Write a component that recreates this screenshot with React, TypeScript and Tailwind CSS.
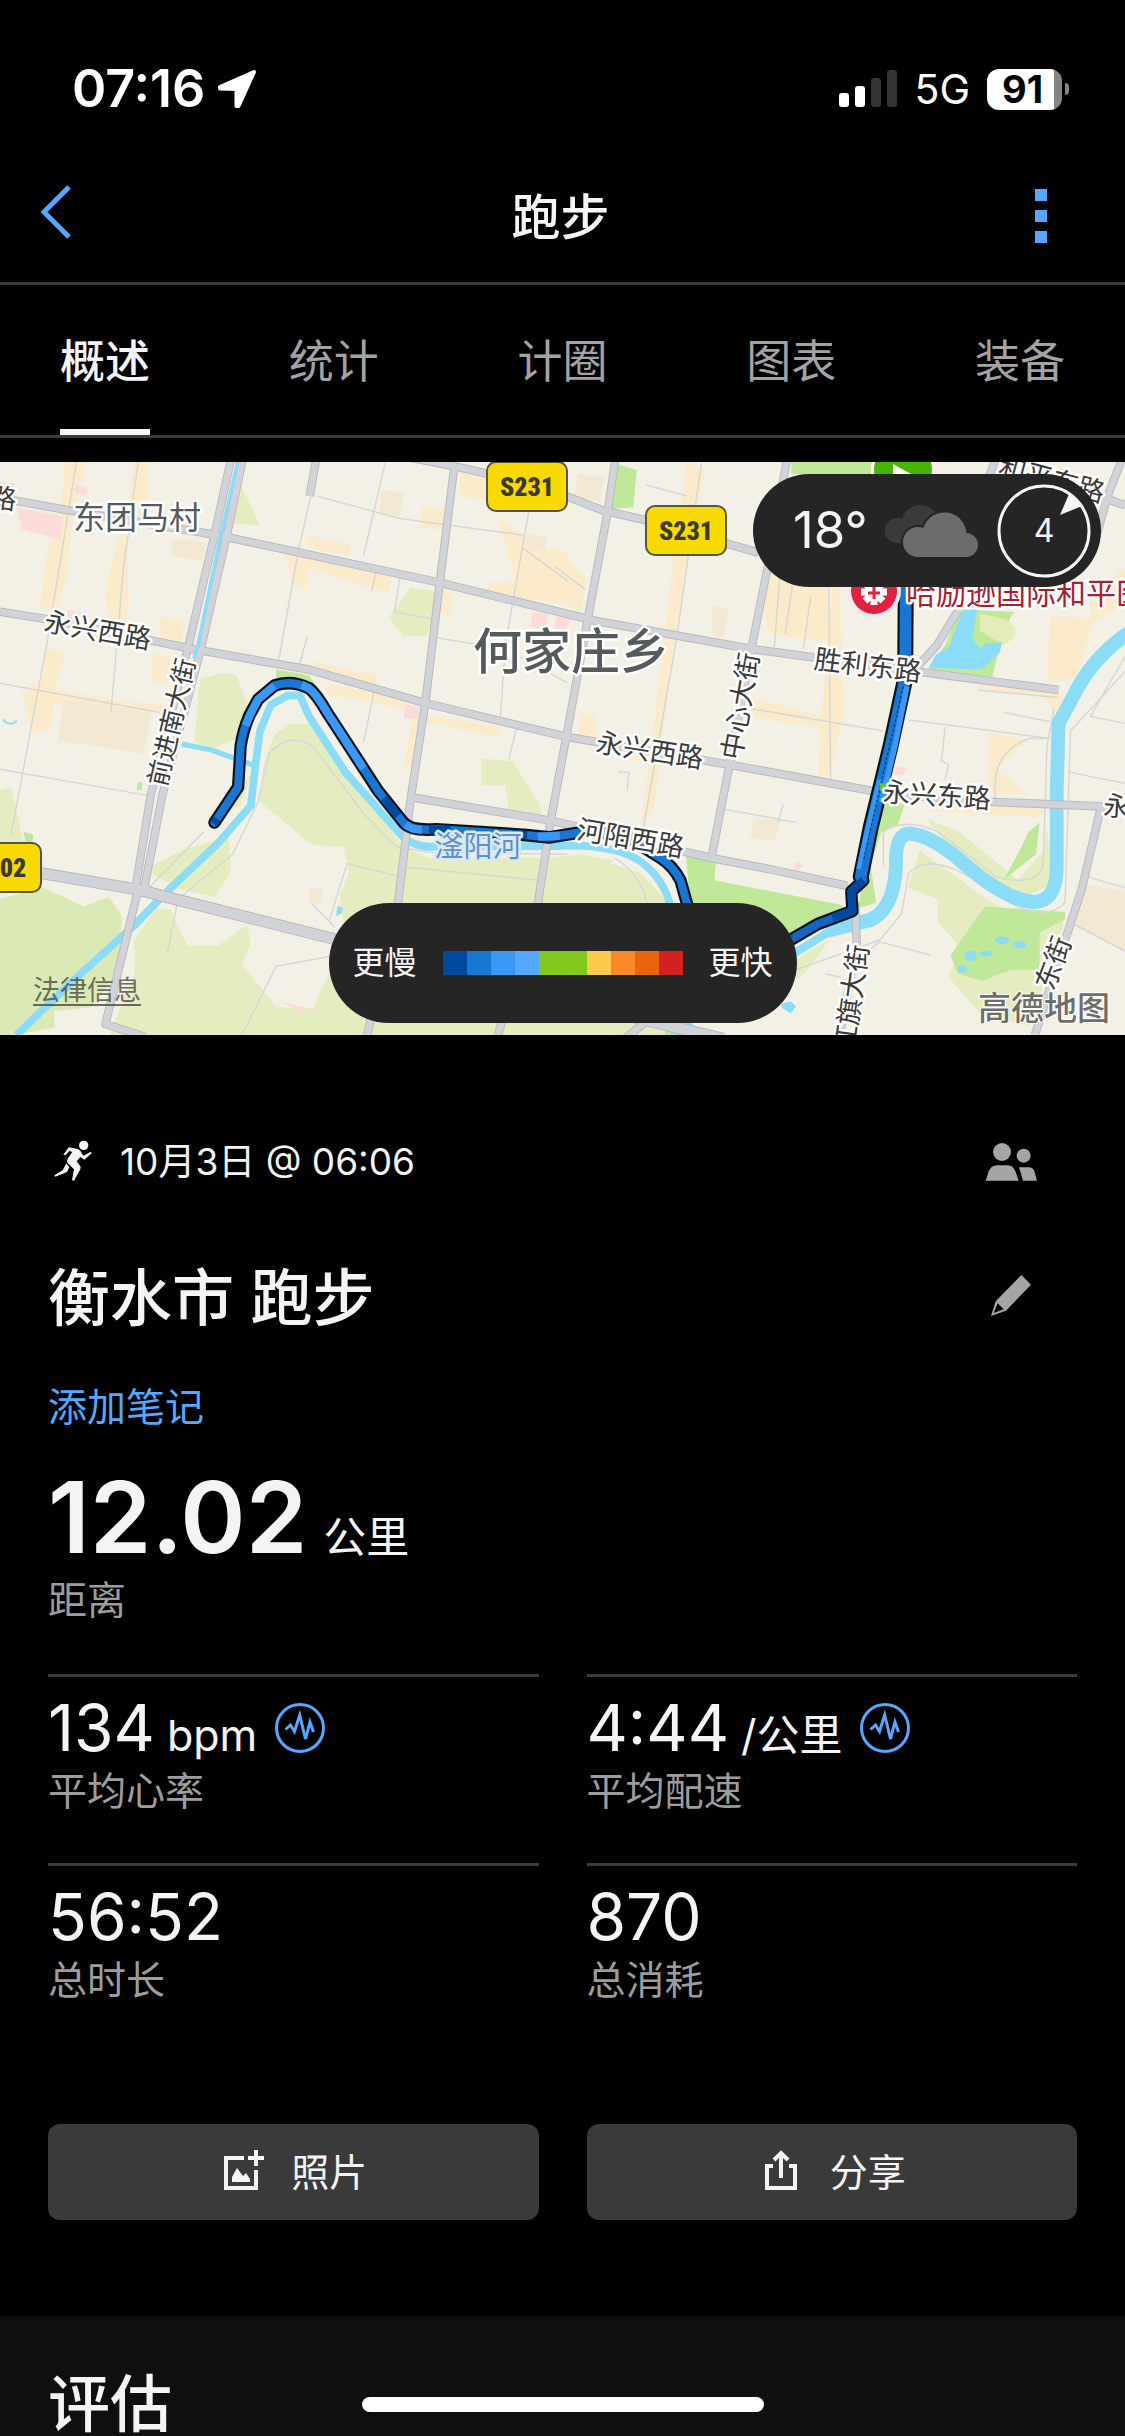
import React from 'react';

const TABS = ['概述', '统计', '计圈', '图表', '装备'];

const PACE_COLORS = [
  'bg-[#004a9e]',
  'bg-[#1976d2]',
  'bg-[#3b97f5]',
  'bg-[#55a7ff]',
  'bg-[#82c91e]',
  'bg-[#82c91e]',
  'bg-[#fccb4b]',
  'bg-[#fa8a28]',
  'bg-[#e9660c]',
  'bg-[#d32020]',
];

const STATS = [
  { label: '平均心率', value: '134', unit: 'bpm', zone: true },
  { label: '平均配速', value: '4:44', unit: '/公里', zone: true },
  { label: '总时长', value: '56:52' },
  { label: '总消耗', value: '870' },
];

// map geometry, all in the map's own grid
const PALE_GREEN = [
  '550,600 610,585 650,590 690,690 650,760 590,785 535,770',
  '715,930 725,830 755,750 800,720 850,720 1110,1050 1180,1080 1510,1080 1600,1070 1760,1120 1840,1200 1840,1555 1500,1555 950,1300 935,1180 960,1120 945,1050 860,1045',
  '300,1555 370,1390 370,1300 430,1215 470,1220 515,1315 600,1315 680,1260 690,1310 665,1365 760,1480 860,1485 905,1390 1000,1290 1500,1290 1560,1555',
  '395,1110 500,1060 630,1020 635,1120 590,1185 500,1165',
  '590,970 625,910 690,860 660,940',
  '665,85 715,188 640,185',
  '1130,355 1195,365 1195,440 1175,485 1110,485 1070,435',
  '1325,815 1410,820 1480,930 1495,985 1400,960 1390,885 1325,885',
  '0,900 30,890 65,1040 0,1080',
  '1580,1075 1690,1085 1660,1115 1610,1115',
  '2190,1350 2280,1300 2230,1370 2190,1410',
  '2497,1160 2530,1060 2700,1180 2800,1240 2930,1225 2920,1280 2890,1370 2830,1530 2700,1500 2610,1400 2640,1320 2580,1250 2580,1190',
  '2550,975 2640,1010 2800,1140 2870,1060 2880,1000 2895,1150 2830,1180 2740,1150 2600,1040',
  '2610,610 2640,590 2730,600 2710,560 2640,560',
];

const GREEN = [
  '760,575 850,590 895,650 885,685 820,610 760,605',
  '65,1010 92,1018 88,1045 70,1035',
  '378,880 392,875 390,898 376,898',
  '1697,25 1752,40 1742,140 1682,145',
  '2177,18 2410,18 2400,60 2177,50',
  '1887,1075 1970,1090 1965,1140 2310,1205 2340,1225 2180,1300 1900,1210',
  '2430,930 2490,935 2470,990 2425,1010 2395,1100 2410,1200 2360,1215 2390,1060',
  '2640,415 2790,420 2760,470 2730,595 2550,578 2600,510',
  '2615,1340 2710,1210 2930,1225 2930,1245 2860,1280 2860,1380 2780,1380 2700,1410 2635,1390',
  '2860,985 2850,1070 2760,1140 2800,1070 2830,1010',
  '1830,1535 1880,1525 1900,1555 1830,1555',
];

const BUILT = [
  '180,18 240,18 200,160 185,330 155,420 110,410 130,260 165,160',
  '370,18 410,18 400,160 350,230 355,400 340,480 300,470 290,370 320,240 350,160',
  '840,215 965,240 960,270 850,250',
  '780,260 1000,310 1080,320 1070,370 1000,350 850,300 845,355 810,350',
  '860,555 1040,590 1030,625 860,590',
  '900,610 1125,660 1120,680 900,640',
  '440,435 505,440 500,500 440,490',
  '420,530 470,540 460,610 415,610',
  '130,520 180,525 150,630 340,660 450,670 445,690 150,665 140,730 90,750 60,640 110,600',
  '1265,40 1340,55 1340,120 1265,110',
  '1160,140 1240,145 1235,200 1160,195',
  '1370,170 1500,250 1560,260 1560,400 1340,370 1340,345 1420,340',
  '1215,360 1250,370 1235,430 1210,420',
  '1135,690 1375,730 1370,755 1170,715 1150,820 1110,850',
  '1527,250 1610,330 1600,420 1527,390',
  '1890,18 1940,40 1860,460 1800,940 1760,1000 1790,800 1850,300',
  '1600,690 1640,700 1640,760 1590,750',
  '1680,780 1790,800 1780,830 1680,800',
  '2070,650 2260,700 2290,350 2310,350 2320,690 2285,860 2250,860 2255,730 2070,700',
  '2020,820 2200,850 2250,890 2030,830',
  '2120,280 2280,330 2280,500 2190,490 2120,480 2100,420',
  '2720,745 2830,765 2740,840 2830,910 2720,910',
  '2560,930 2870,950 2860,970 2560,955',
  '2690,610 2930,640 2900,700 2880,650 2700,630',
  '2890,430 3010,440 2960,600 2880,610',
  '3000,380 3095,300 3095,400 3000,450',
];

const SAND = [
  '175,655 415,690 395,800 160,765',
  '475,225 570,235 555,285 470,270',
  '1045,95 1110,100 1100,165 1045,155',
  '1450,210 1505,220 1500,255 1450,250',
  '850,1160 890,1165 880,1205 850,1200',
  '1590,50 1660,60 1650,125 1580,110',
  '1960,405 2005,415 1990,490 1960,480',
  '2075,975 2150,980 2130,1035 2065,1025',
  '2975,1150 3095,1170 3095,1330 2950,1260',
];

const PINK = [
  '45,140 175,165 165,225 60,200',
  '208,80 242,90 235,110 205,100',
  '190,415 235,425 225,445 180,435',
  '1115,670 1155,675 1150,710 1110,705',
  '1465,420 1510,425 1500,465 1460,460',
  '1530,430 1575,440 1550,470 1525,465',
  '2460,835 2495,840 2485,860 2455,855',
  '2187,1090 2210,1095 2200,1115 2183,1112',
  '765,1465 860,1485 830,1490',
];

const STREETS = [
  'M210 20 L130 500 L30 1020',
  'M380 20 L340 300 L305 690',
  'M0 612 L440 690',
  'M0 842 L420 915',
  'M855 110 L820 260 L765 560',
  'M870 110 L1100 170 L1440 215',
  'M1060 20 L1000 270 M1035 315 L1022 365',
  'M1100 330 L1085 420 L1190 440 M845 485 L825 560',
  'M1200 490 L1390 520 L1560 610 M1390 520 L1375 720',
  'M1455 150 L1390 510 M1440 250 L1565 340',
  'M1030 630 L1000 770 M1420 735 L1400 815',
  'M400 1170 L560 1010 M490 1190 L640 1070 L710 930 L740 800 Q800 740 860 780 L1000 960 L1090 1050 L1180 1065 L1560 1070',
  'M490 1190 L460 1335 M955 1095 L905 1250 M955 1095 L1100 1130 M860 1205 L920 1265',
  'M1120 1105 L1480 1140 M665 1555 L760 1370 L905 1345',
  'M1777 80 L1890 110 M1930 20 L1860 500 L1770 1000',
  'M2280 350 L2285 870 M2067 680 L2430 740',
  'M2500 710 L2620 725 L2890 760 M2600 730 L2590 820 L2610 830 L2600 870',
  'M2740 930 Q2720 800 2830 760 L2880 760 M1995 950 L2190 985 M2155 935 L2140 985',
  'M1700 850 L1730 850 L1725 900 M2145 330 L2130 520 M2180 350 L2160 480 M2230 380 L2210 520',
  'M2190 1380 L2420 1300 L2480 1230 L2500 1120 Q2560 1060 2700 1150 Q2860 1270 2930 1200 L2945 740 L3095 580',
  'M2430 1100 L2430 1010 Q2490 970 2580 1010 L2740 1130 Q2850 1160 2870 1100 L2880 780 L2900 680',
  'M2360 1350 L2420 1305 L2560 1340 M2270 1390 L2310 1400 M2960 1260 L3095 1330',
  'M3095 540 L3000 700 L3095 720 M2940 850 L3095 880 M2990 1130 L3095 1160',
  'M1777 150 L1920 190 M1527 300 L1610 360 M2690 630 L2910 650 M2760 690 L2890 715',
  'M1690 1080 Q1760 1120 1780 1200 M0 75 L40 80 M1180 20 L1250 35',
];

const ROADS = [
  'M0 115 L200 150 L600 215 L1200 340 L1640 445 L2067 520 L2507 578 L2912 630',
  'M0 420 L130 440 L530 520 L850 575 L1170 665 L1557 755 L2007 830 L2397 900 L2527 915 L2737 930 L3037 942 L3095 945',
  'M1090 0 L1250 30 L1340 50 L1557 110 L1657 148 L1777 175 L2087 262',
  'M1250 30 L1210 340 L1170 665 L1130 920 L1095 1200 L1010 1555',
  'M1692 18 L1672 150 L1617 440 L1557 760 L1515 980 L1480 1200 L1370 1555',
  'M2167 0 L2112 300 L2067 520 L2007 830 L1957 1080',
  'M1135 918 L1515 980 L1957 1080 L2127 1112 L2332 1155',
  'M2352 1200 L2357 1310 L2310 1560',
  'M3027 950 L2977 1160 L2937 1280 L2847 1555',
  'M2637 415 L2577 510 L2520 572',
  'M3087 10 L3047 110 L3010 240 M2940 80 L3095 135 M2740 10 L2720 60',
  'M870 10 L852 110',
  'M1700 1580 L1800 1500',
  'M636 10 L585 235 L515 525 L415 910 L372 1165 M668 10 L622 225 L550 530 L447 910 L396 1165',
  'M380 1165 L290 1525 L400 1560',
];

const HIGHWAY = 'M110 1120 L380 1165 L500 1195 L930 1300 L1777 1515 L1990 1565';

const RIVER_WEST =
  'M45 1555 L200 1410 L370 1260 L470 1160 L600 1040 L690 940 L703 830 L715 740 L745 670 L790 645 L825 645 L850 700 L950 850 L1100 1015 Q1130 1048 1180 1050 L1527 1048 Q1700 1040 1770 1095 Q1840 1150 1850 1240';

const RIVER_EAST =
  'M2277 1275 L2397 1245 Q2460 1215 2465 1100 Q2462 1010 2507 1015 Q2560 1020 2640 1085 Q2760 1190 2840 1198 Q2905 1200 2907 1110 L2907 900 L2912 720 L2967 620 Q3020 530 3115 470';

const ROUTE_WEST =
  'M590 985 L655 890 L662 780 Q668 740 685 700 L710 655 L755 618 Q800 602 850 625 Q870 640 900 690 L1040 900 L1110 985 Q1130 1008 1200 1003 L1440 1018 L1510 1025 L1620 1008 L1720 1020 L1817 1080 Q1850 1100 1872 1140 L1895 1220';

const ROUTE_SOUTH = 'M2165 1305 L2250 1257 L2345 1222 L2342 1170 L2375 1140';

const ROUTE_EAST = 'M2368 1130 L2395 1000 L2450 780 L2490 600 L2492 340';

const LABELS = [
  { text: '东团马村', x: 137, y: 55, size: 32, turn: 0 },
  { text: '何家庄乡', x: 571, y: 188, size: 49, turn: 0 },
  { text: '路', x: 3, y: 36, size: 27, turn: 8 },
  { text: '永兴西路', x: 98, y: 168, size: 27, turn: 10 },
  { text: '前进南大街', x: 171, y: 260, size: 26, turn: -77 },
  { text: '永兴西路', x: 650, y: 288, size: 27, turn: 9 },
  { text: '中心大街', x: 740, y: 244, size: 27, turn: -80 },
  { text: '胜利东路', x: 868, y: 203, size: 27, turn: 7 },
  { text: '永兴东路', x: 937, y: 333, size: 27, turn: 4 },
  { text: '永', x: 1117, y: 344, size: 27, turn: 4 },
  { text: '河阳西路', x: 631, y: 376, size: 27, turn: 10 },
  { text: '红旗大街', x: 851, y: 536, size: 27, turn: -82 },
  { text: '东街', x: 1053, y: 501, size: 27, turn: -69 },
  { text: '和平东路', x: 1052, y: 17, size: 27, turn: 15 },
];

const SHIELDS = [
  { text: 'S231', x: 487, y: 0, width: 80, textX: 527 },
  { text: 'S231', x: 646, y: 44, width: 80, textX: 686 },
  { text: '02', x: -28, y: 381, width: 69, textX: 13 },
];

const RouteMap: React.FC = () => (
  <svg
    viewBox="0 0 1125 573"
    preserveAspectRatio="xMidYMid slice"
    className="block h-[573px] w-full font-['Noto_Sans_CJK_SC',sans-serif]"
    role="img"
    aria-label="地图"
  >
    <rect width="1125" height="573" fill="#f3f0e5" />
    <g transform="translate(0 -7) scale(.3635 .3731)" fill="none" strokeLinejoin="round">
      <polygon
        points="0,1190 120,1160 230,1210 300,1185 335,1235 330,1380 250,1480 150,1490 150,1535 0,1560"
        fill="#dbe9b5"
      />
      {PALE_GREEN.map((p) => <polygon key={p} points={p} fill="#e5ecbf" />)}
      {GREEN.map((p) => <polygon key={p} points={p} fill="#bfe899" />)}
      {BUILT.map((p) => <polygon key={p} points={p} fill="#fcebcb" />)}
      {SAND.map((p) => <polygon key={p} points={p} fill="#f3e8d2" />)}
      {PINK.map((p) => <polygon key={p} points={p} fill="#fbdcd9" />)}
      <polygon points="2697,425 2765,440 2795,465 2790,490 2760,510 2695,470" fill="#e3edb9" />

      {STREETS.map((d) => <path key={d} d={d} stroke="#d5d8d8" strokeWidth="4" />)}

      <g stroke="#8bdcf7">
        <path d={RIVER_WEST} strokeWidth="21" />
        <path d={RIVER_EAST} strokeWidth="38" />
        <path d="M2170 1345 L2290 1272" strokeWidth="22" />
        <path d="M500 775 L580 790 L700 832" strokeWidth="14" />
        <path d="M1840 1580 L1900 1520" strokeWidth="24" />
        <path d="M8 708 Q15 722 35 720 L46 712" strokeWidth="5" />
      </g>
      <g fill="#8bdcf7">
        <polygon points="2650,415 2688,415 2675,495 2700,520 2710,505 2757,502 2750,530 2700,575 2555,570 2575,535 2610,515" />
        <ellipse cx="2757" cy="1301" rx="20" ry="10" />
        <ellipse cx="2805" cy="1312" rx="20" ry="9" />
        <ellipse cx="2670" cy="1342" rx="17" ry="14" />
        <ellipse cx="2712" cy="1336" rx="17" ry="8" />
        <ellipse cx="2647" cy="1378" rx="13" ry="10" />
        <polygon points="2150,1470 2175,1465 2190,1478 2175,1497 2150,1480" />
        <polygon points="928,1208 943,1212 940,1228 925,1236" />
      </g>

      {ROADS.map((d) => <path key={d} d={d} stroke="#b7b9bf" strokeWidth="23" />)}
      <path d={HIGHWAY} stroke="#b7b9bf" strokeWidth="32" />
      {ROADS.map((d) => <path key={d} d={d} stroke="#d2d3d8" strokeWidth="18" />)}
      <path d={HIGHWAY} stroke="#d2d3d8" strokeWidth="27" />
      <path d="M655 15 L604 230 L545 510 L533 545" stroke="#8bdcf7" strokeWidth="10" />

      <g strokeLinecap="round">
        <path d={ROUTE_WEST} stroke="#08131f" strokeWidth="34" />
        <path d={ROUTE_SOUTH} stroke="#08131f" strokeWidth="34" />
        <path d={ROUTE_EAST} stroke="#08131f" strokeWidth="44" />
        <path d={ROUTE_WEST} stroke="#1976d2" strokeWidth="22" />
        <path d={ROUTE_SOUTH} stroke="#1467c0" strokeWidth="22" />
        <path d={ROUTE_EAST} stroke="#1976d2" strokeWidth="32" />
      </g>
      <g stroke="#3b97f5" strokeWidth="22">
        <path d="M676 725 Q690 690 710 655 L755 618" />
        <path d="M830 616 L850 625 Q870 640 900 690 L1000 840" />
        <path d="M1115 990 Q1135 1006 1160 1004 M1480 1023 L1540 1020" />
      </g>
      <g stroke="#004a9e" strokeWidth="22">
        <path d="M1055 920 L1095 967 M1180 1004 L1240 1005 M1410 1016 L1450 1019 M587 988 L597 975" />
        <path d="M2290 1240 L2345 1222 L2342 1170 L2375 1140" />
      </g>
      <path d="M2495 620 L2462 780 L2425 930" stroke="#3b97f5" strokeWidth="15" />
      <path d="M2420 870 L2385 1010 L2362 1110" stroke="#3b97f5" strokeWidth="13" />
      <path d="M2485 620 L2445 790 L2400 980 L2375 1090" stroke="#123a66" strokeWidth="3" strokeDasharray="8 5" />
      <rect x="2421" y="880" width="14" height="20" fill="#6fc41e" />
    </g>

    {/* start marker */}
    <circle cx="903" cy="8" r="32" fill="#fff" />
    <circle cx="903" cy="8" r="29" fill="#46b400" />
    <path d="M893 2 L893 34 L922 18 Z" fill="#fff" />

    {SHIELDS.map((s) => (
      <g key={s.x}>
        <rect x={s.x} y={s.y} width={s.width} height="49" rx="9" fill="#f9da00" stroke="#55544a" strokeWidth="2" />
        <text
          x={s.textX}
          y={s.y + 34}
          textAnchor="middle"
          fontSize="26"
          fontWeight="900"
          fill="#3a3a30"
          className="font-['Roboto_Condensed','Liberation_Sans_Narrow','Roboto',sans-serif]"
        >
          {s.text}
        </text>
      </g>
    ))}

    <g textAnchor="middle" stroke="#fff" strokeWidth="5" strokeLinejoin="round" style={{ paintOrder: 'stroke' }}>
      {LABELS.map((l) => (
        <text
          key={`${l.text}${l.x}`}
          transform={`translate(${l.x} ${l.y}) rotate(${l.turn})`}
          y={Math.round(l.size * 0.38)}
          fontSize={l.size}
          fontWeight={l.size > 40 ? 500 : 400}
          fill={l.size > 30 ? '#555a5c' : '#3a3a3a'}
        >
          {l.text}
        </text>
      ))}
      <text x="478" y="395" fontSize="29" fill="#5a93d2" stroke="#dde8ee">滏阳河</text>
      <text x="906" y="142" fontSize="30" fontWeight="400" textAnchor="start" fill="#a8202f">
        哈励逊国际和平医院
      </text>
      <text x="1044" y="558" fontSize="33" fontWeight="500" fill="#6d6d6a" strokeWidth="2">
        高德地图
      </text>
    </g>

    {/* hospital pin */}
    <circle cx="874" cy="129" r="27" fill="#eceaea" />
    <circle cx="874" cy="129" r="23" fill="#e2203f" />
    <path d="M874 117v26M861 130h26M865 121l18 18M883 121l-18 18" stroke="#fff" strokeWidth="7" />
    <path d="M874 125v12M868 131h12" stroke="#e2203f" strokeWidth="3" />
  </svg>
);

const StatusBar: React.FC = () => (
  <div className="flex h-[138px] items-start justify-between pl-[72px] pr-14 pt-16 text-white">
    <div className="flex items-center gap-3">
      <span className="text-[52px] font-semibold leading-[50px]">07:16</span>
      <svg viewBox="0 0 40 40" className="size-10" fill="#fff" stroke="#fff" strokeWidth="4" strokeLinejoin="round">
        <path d="M3 18 L37 3 L21.500 37 L19.500 37 L19.500 20 L3 19.500 Z" />
      </svg>
    </div>
    <div className="flex items-center gap-[17px] pt-[2px]">
      <svg viewBox="0 0 58 38" className="h-[38px] w-[58px]">
        <rect y="23" width="10" height="14" rx="3" fill="#fff" />
        <rect x="16" y="16" width="10" height="21" rx="3" fill="#fff" />
        <rect x="32" y="8" width="10" height="29" rx="3" fill="#333" />
        <rect x="48" width="10" height="37" rx="3" fill="#333" />
      </svg>
      <span className="text-[41px] leading-[46px]">5G</span>
      <span className="flex items-center gap-[3px]">
        <span className="flex h-[41px] w-[75px] items-center justify-center rounded-xl bg-linear-to-r from-white from-90% to-[#858585] to-90% pr-1 text-[38px] font-bold leading-[41px] text-black">
          91
        </span>
        <span className="h-3 w-1 rounded-r-full bg-[#858585]" />
      </span>
    </div>
  </div>
);

const ZoneIcon: React.FC = () => (
  <svg viewBox="0 0 50 50" className="size-[50px]" fill="none" stroke="#55a7ff" strokeWidth="3">
    <circle cx="25" cy="25" r="23.500" />
    <path d="M10.500 26.500 L15.500 22 L19.500 28.500 L24.700 12 L30.500 36 L35 19 L38.500 29" />
  </svg>
);

const App: React.FC = () => {
  return (
    <div className="relative flex min-h-screen flex-col overflow-hidden bg-black font-['Inter','Noto_Sans_CJK_SC',sans-serif] text-[#f4f4f4]">
      <StatusBar />

      <header className="flex h-[147px] items-center justify-between border-b-3 border-[#3b3b3b] pl-[38px] pr-[66px]">
        <button type="button" aria-label="返回" className="w-[60px] pt-1">
          <svg viewBox="0 0 36 56" className="h-14 w-9" fill="none" stroke="#55a7ff" strokeWidth="5">
            <path d="M31 3 L6 28 L31 53" />
          </svg>
        </button>
        <h1 className="pl-6 pt-4 text-[49px] font-medium leading-[60px]">跑步</h1>
        <button type="button" aria-label="更多" className="flex w-[60px] flex-col items-end gap-[9px] pr-3 pt-3">
          <span className="size-3 bg-[#55a7ff]" />
          <span className="size-3 bg-[#55a7ff]" />
          <span className="size-3 bg-[#55a7ff]" />
        </button>
      </header>

      <nav className="flex h-[153px] justify-between border-b-3 border-[#3b3b3b] px-[60px]">
        {TABS.map((tab, i) => (
          <button
            key={tab}
            type="button"
            className={
              i === 0
                ? 'border-b-6 border-[#f4f4f4] pt-[10px] text-[45px] font-medium'
                : 'border-b-6 border-transparent pt-[10px] text-[45px] text-[#a3a3a3]'
            }
          >
            {tab}
          </button>
        ))}
      </nav>

      <section className="relative mt-6">
        <RouteMap />
        <div className="absolute right-6 top-3 flex h-[113px] w-[348px] items-center justify-between rounded-full bg-[#252525] pl-10 pr-2">
          <span className="text-[51px]">18°</span>
          <svg viewBox="432 126 297 174" className="h-[58px] w-[99px]">
            <g fill="#3a3a3a">
              <circle cx="478" cy="212" r="38" />
              <circle cx="547" cy="192" r="57" />
            </g>
            <path
              d="M538 291 A45 45 0 1 1 556 204 A66 66 0 0 1 685 219 A36 36 0 0 1 683 291 Z"
              fill="#6c6c6c"
              stroke="#252525"
              strokeWidth="12"
              style={{ paintOrder: 'stroke' }}
            />
          </svg>
          <svg viewBox="0 0 98 98" className="size-[98px]">
            <circle cx="49" cy="49" r="45" fill="none" stroke="#f4f4f4" strokeWidth="3" />
            <path d="M74 12 L87 24 L65 33 Z" fill="#f4f4f4" />
            <text x="49" y="60" fontSize="32" textAnchor="middle" fill="#f4f4f4">4</text>
          </svg>
        </div>
        <a href="#legal" className="absolute bottom-6 left-[33px] text-[27px] leading-[40px] text-[#4a4a40]/80 underline underline-offset-4">
          法律信息
        </a>
        <div className="absolute bottom-3 left-1/2 flex h-[120px] -translate-x-1/2 items-center gap-[26px] whitespace-nowrap rounded-full bg-[#252525] px-6 text-[32px]">
          <span>更慢</span>
          <div className="flex">
            {PACE_COLORS.map((color, i) => (
              <span key={i} className={`size-6 ${color}`} />
            ))}
          </div>
          <span>更快</span>
        </div>
      </section>

      <main className="px-12 pb-24 pt-[103px]">
        <div className="flex items-center justify-between pr-[38px]">
          <p className="flex items-center gap-6 text-[37px] leading-[48px]">
            <svg viewBox="54 54 144 144" className="size-12" fill="#f4f4f4">
              <circle cx="161" cy="76" r="14" />
              <path d="M116 82 L143 87 Q153 91 156 101 L161 107 L182 95 L185 100 L163 119 L151 111 L140 124 L152 140 L151 148 L132 182 L126 181 L132 148 L113 129 Q109 123 114 115 L127 96 L118 93 L107 106 L100 104 Z" />
              <path d="M109 130 L118 142 L111 156 L76 170 L73 166 L98 151 Z" />
            </svg>
            10月3日 @ 06:06
          </p>
          <svg viewBox="39 54 168 144" className="h-12 w-14" fill="#a5a5a5">
            <circle cx="96" cy="96" r="27" />
            <circle cx="161" cy="107" r="21" />
            <path d="M47 182 L56 154 Q64 136 80 136 L114 136 Q129 136 136 154 L146 182 Z" />
            <path d="M147 142 L178 142 Q190 143 194 156 L201 182 L159 182 Z" />
          </svg>
        </div>

        <div className="mt-[73px] flex items-center justify-between pr-[38px]">
          <h2 className="pt-1 text-[62px] font-medium leading-[72px]">衡水市 跑步</h2>
          <button type="button" aria-label="编辑">
            <svg viewBox="39 453 168 144" className="h-12 w-14" fill="#a5a5a5">
              <path
                fillRule="evenodd"
                d="M154 459 L183 488 L108 566 L63 582 L77 538 Z M83 544 L71 573 L101 562 Z"
              />
            </svg>
          </button>
        </div>

        <a href="#note" className="mt-12 block text-[39px] leading-[48px] text-[#55a7ff]">
          添加笔记
        </a>

        <p className="mt-9 flex items-baseline gap-4">
          <span className="text-[99px] font-semibold leading-[100px]">12.02</span>
          <span className="text-[43px] leading-[48px]">公里</span>
        </p>
        <p className="mt-[9px] text-[39px] leading-[48px] text-[#9d9d9d]">距离</p>

        <dl className="mt-[50px] grid grid-cols-2 gap-x-12">
          {STATS.map((stat) => (
            <div key={stat.label} className="flex flex-col-reverse gap-[7px] border-t-3 border-[#3b3b3b] pb-12 pt-[19px]">
              <dt className="text-[39px] leading-[48px] text-[#9d9d9d]">{stat.label}</dt>
              <dd className="flex items-center gap-[18px]">
                <span className="flex items-baseline gap-3">
                  <span className="text-[64px] leading-[64px]">{stat.value}</span>
                  {stat.unit && <span className="text-[43px] leading-[48px]">{stat.unit}</span>}
                </span>
                {stat.zone && <ZoneIcon />}
              </dd>
            </div>
          ))}
        </dl>

        <div className="mt-[72px] grid grid-cols-2 gap-x-12">
          <button type="button" className="flex h-24 items-center justify-center gap-6 rounded-xl bg-[#3a3a3a] text-[38px]">
            <svg viewBox="0 0 48 48" className="size-12" fill="none" stroke="#f4f4f4" strokeWidth="4">
              <path d="M25 10 H7 V40 H37 V22" />
              <path d="M37 2 V18 M29 10 H45" />
              <path d="M13 34 V29 L18 20 L24 28 L27 25 L31 31 V34 Z" fill="#f4f4f4" stroke="none" />
            </svg>
            照片
          </button>
          <button type="button" className="flex h-24 items-center justify-center gap-6 rounded-xl bg-[#3a3a3a] text-[38px]">
            <svg viewBox="0 0 48 48" className="size-12" fill="none" stroke="#f4f4f4" strokeWidth="4">
              <path d="M15 18 H9 V40 H37 V18 H31" />
              <path d="M23 30 V6 M16 12 L23 5 L30 12" />
            </svg>
            分享
          </button>
        </div>
      </main>

      <section className="flex-1 bg-[#0f0f0f] px-12 pt-[58px]">
        <h2 className="text-[62px] font-medium leading-[62px]">评估</h2>
      </section>

      <div className="fixed bottom-6 left-1/2 h-[15px] w-[402px] -translate-x-1/2 rounded-full bg-white" />
    </div>
  );
};

export default App;
